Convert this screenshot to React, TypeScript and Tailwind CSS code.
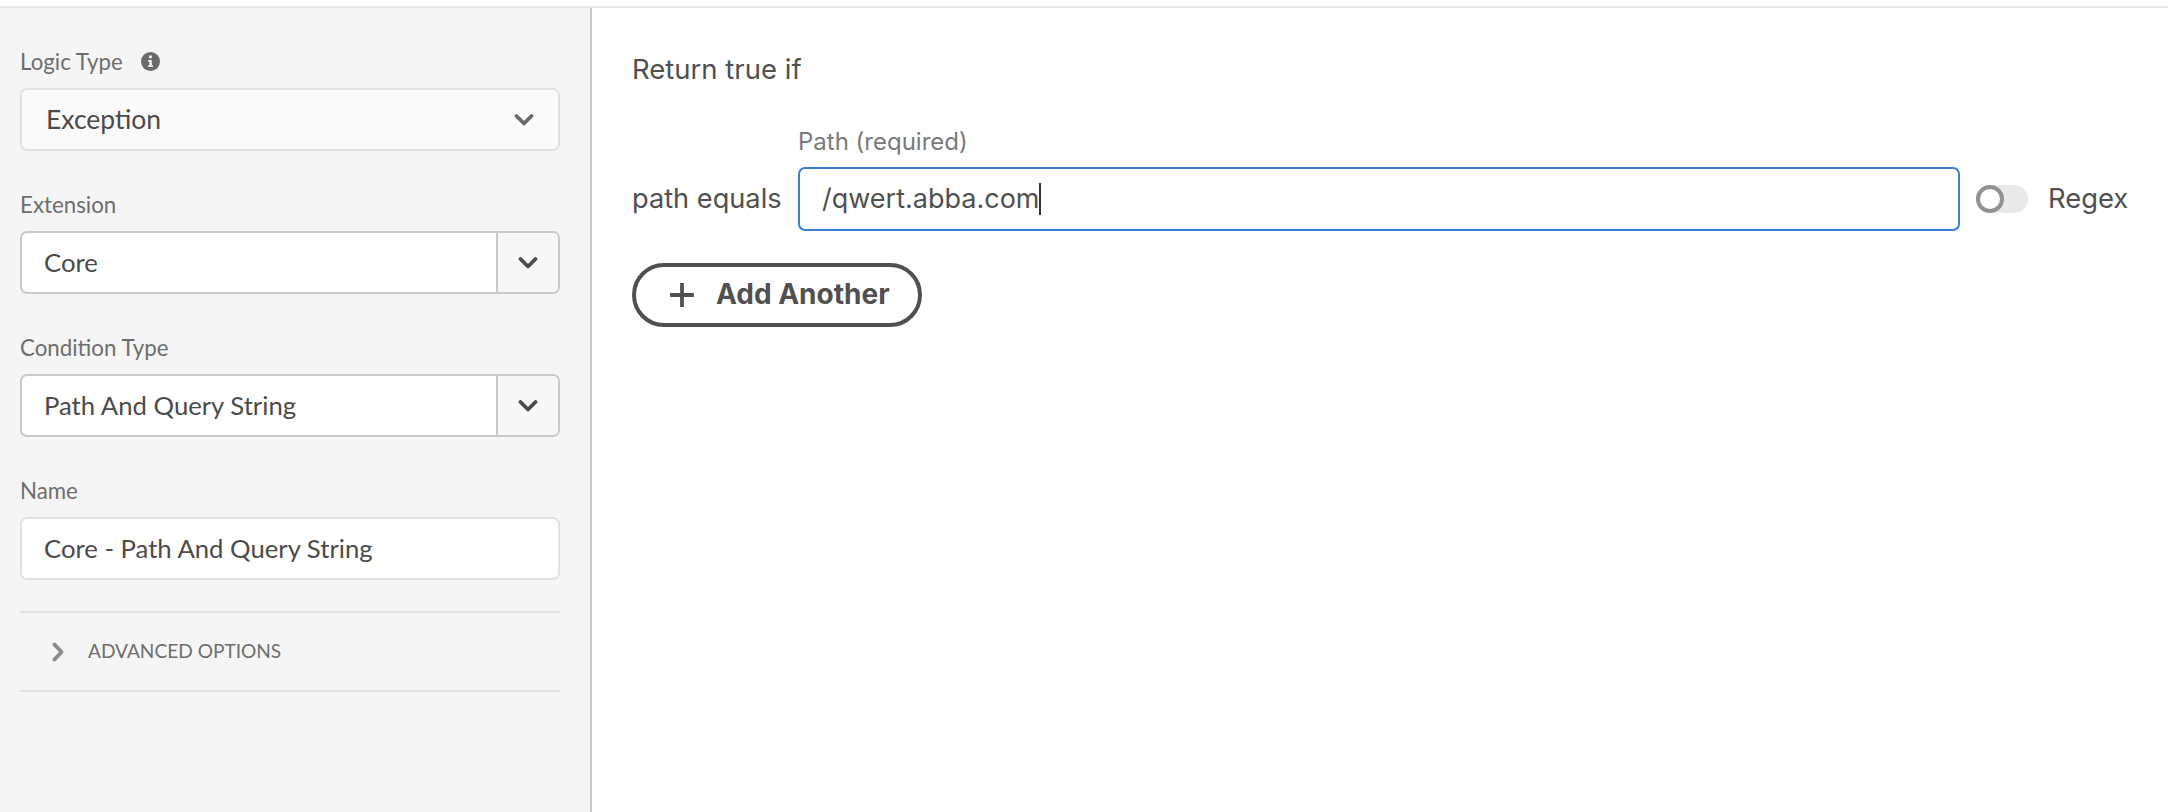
import * as React from 'react'

function Chevron({ className }: { className: string }) {
  return (
    <svg viewBox="0 0 20 14" className={className} fill="none" stroke="currentColor" strokeWidth="3.8" strokeLinecap="round" strokeLinejoin="round">
      <path d="M2.5 3 L10 10.5 L17.5 3" />
    </svg>
  )
}

function FieldLabel({ children }: { children: React.ReactNode }) {
  return <div className="h-[40px] flex items-start text-[22.3px] leading-[28px] text-[#6e6e6e]">{children}</div>
}

function ComboBox({ value }: { value: string }) {
  return (
    <div className="h-[63px] flex bg-white border-2 border-[#c9c9c9] rounded-[7px] overflow-hidden">
      <div className="flex-1 flex items-center pl-[22px] text-[25.7px] text-[#4b4b4b]">{value}</div>
      <div className="w-[62px] flex items-center justify-center bg-[#f7f7f7] border-l-2 border-[#c9c9c9]">
        <Chevron className="w-[20px] h-[14px] text-[#4b4b4b]" />
      </div>
    </div>
  )
}

function Sidebar() {
  return (
    <aside className="w-[592px] shrink-0 bg-[#f5f5f5] border-r-2 border-[#c8c8c8] pl-[20px] pr-[30px] pt-[40px] font-['Lato',sans-serif]">
      <FieldLabel>
        <span>Logic Type</span>
        <svg viewBox="0 0 18 18" className="w-[19px] h-[19px] ml-[18px] mt-[4px] text-[#6a6a6a]">
          <circle cx="9" cy="9" r="9" fill="currentColor" />
          <circle cx="9" cy="4.6" r="1.6" fill="#f5f5f5" />
          <path d="M6.8 7.6 H10.2 V12.6 H11.4 V14.2 H6.8 V12.6 H8 V9.2 H6.8 Z" fill="#f5f5f5" />
        </svg>
      </FieldLabel>
      <div className="h-[63px] flex items-center justify-between bg-[#fafafa] border-2 border-[#e1e1e1] rounded-[7px] pl-[24px] pr-[24px] text-[26.5px] text-[#4b4b4b]">
        <span>Exception</span>
        <Chevron className="w-[20px] h-[14px] text-[#6a6a6a]" />
      </div>

      <div className="mt-[40px]">
        <FieldLabel>Extension</FieldLabel>
        <ComboBox value="Core" />
      </div>

      <div className="mt-[40px]">
        <FieldLabel>Condition Type</FieldLabel>
        <ComboBox value="Path And Query String" />
      </div>

      <div className="mt-[40px]">
        <FieldLabel>Name</FieldLabel>
        <div className="h-[63px] flex items-center bg-white border-2 border-[#e1e1e1] rounded-[7px] pl-[22px] text-[25.7px] text-[#4b4b4b]">
          Core - Path And Query String
        </div>
      </div>

      <div className="mt-[31px] h-[81px] flex items-center border-y-2 border-[#e1e1e1] pl-[32px]">
        <svg viewBox="0 0 12 20" className="w-[12px] h-[20px] text-[#8a8a8a]" fill="none" stroke="currentColor" strokeWidth="3.8" strokeLinecap="round" strokeLinejoin="round">
          <path d="M2.5 2.5 L9.5 10 L2.5 17.5" />
        </svg>
        <span className="ml-[24px] text-[19.1px] text-[#6e6e6e]">ADVANCED OPTIONS</span>
      </div>
    </aside>
  )
}

function PathRow() {
  return (
    <div className="mt-[40px] flex items-end">
      <div className="w-[166px] h-[64px] flex items-center text-[27.2px] text-[#505050] shrink-0">path equals</div>
      <div className="w-[1162px]">
        <div className="h-[40px] pt-[1px] text-[24px] leading-[28px] text-[#7a7a7a]">Path (required)</div>
        <div className="h-[64px] flex items-center border-2 border-[#3a7fd0] rounded-[7px] pl-[22px] text-[27px] text-[#505050]">
          <span>/qwert.abba.com</span>
          <span className="w-[2px] h-[32px] ml-[-1px] bg-[#333333]" />
        </div>
      </div>
      <div className="h-[64px] flex items-center ml-[16px]">
        <div className="relative w-[52px] h-[28px] rounded-full bg-[#e9e9e9]">
          <div className="absolute left-0 top-0 w-[28px] h-[28px] rounded-full bg-white border-[4px] border-[#929292]" />
        </div>
        <span className="ml-[20px] text-[27.4px] text-[#505050]">Regex</span>
      </div>
    </div>
  )
}

export default function App() {
  return (
    <div className="w-[2168px] h-[812px] flex flex-col bg-white overflow-hidden">
      <div className="h-[8px] shrink-0 border-b-2 border-[#e8e8e8]" />
      <div className="flex-1 flex min-h-0">
        <Sidebar />
        <main className="flex-1 pl-[40px] pt-[45px] font-['Inter',sans-serif]">
          <div className="h-[34px] flex items-center text-[27.5px] text-[#505050]">Return true if</div>
          <PathRow />
          <button className="mt-[32px] w-[290px] h-[64px] flex items-center border-[4px] border-[#505050] rounded-full pl-[34px] text-[#505050]">
            <svg viewBox="0 0 24 24" className="w-[24px] h-[24px]" fill="none" stroke="currentColor" strokeWidth="3.8" strokeLinecap="square">
              <path d="M12 2 V22 M2 12 H22" />
            </svg>
            <span className="ml-[22px] text-[28px] font-bold mt-[-2px]">Add Another</span>
          </button>
        </main>
      </div>
    </div>
  )
}
